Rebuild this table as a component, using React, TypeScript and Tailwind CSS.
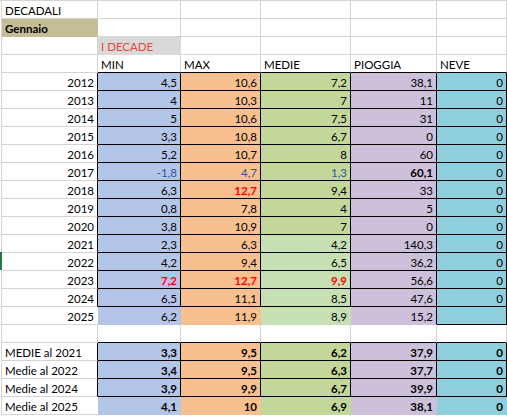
import React from "react";

type Edge = "g" | "k" | "t";
type Cell = {
  t?: string;
  right?: boolean;
  bg?: string;
  fg?: string;
  bold?: boolean;
  er?: Edge;
  eb?: Edge;
};

const R: Record<Edge, string> = {
  g: "border-r-[#d4d4d4]",
  k: "border-r-black",
  t: "border-r-transparent",
};
const B: Record<Edge, string> = {
  g: "border-b-[#d4d4d4]",
  k: "border-b-black",
  t: "border-b-transparent",
};

const BLUE = "bg-[#b4c6e7]";
const BLUE2 = "bg-[#b4c3e8]";
const ORANGE = "bg-[#f9c08f]";
const GREEN = "bg-[#c4d79b]";
const GREEN2 = "bg-[#c6e0b4]";
const PURPLE = "bg-[#ccc0da]";
const CYAN = "bg-[#8fcedd]";

const RED = "text-[#ff0000]";
const DBLUE = "text-[#2f5597]";

const empty = (er: Edge = "g", eb: Edge = "g"): Cell => ({ er, eb });

// year, MIN, MAX, MEDIE, PIOGGIA, NEVE
const years: [string, ...(string | Cell)[]][] = [
  ["2012", "4,5", "10,6", "7,2", "38,1", "0"],
  ["2013", "4", "10,3", "7", "11", "0"],
  ["2014", "5", "10,6", "7,5", "31", "0"],
  ["2015", "3,3", "10,8", "6,7", "0", "0"],
  ["2016", "5,2", "10,7", "8", "60", "0"],
  ["2017", { t: "-1,8", fg: DBLUE }, { t: "4,7", fg: DBLUE }, { t: "1,3", fg: DBLUE }, { t: "60,1", bold: true }, "0"],
  ["2018", "6,3", { t: "12,7", fg: RED, bold: true }, "9,4", "33", "0"],
  ["2019", "0,8", "7,8", "4", "5", "0"],
  ["2020", "3,8", "10,9", "7", "0", "0"],
  ["2021", "2,3", "6,3", "4,2", "140,3", "0"],
  ["2022", "4,2", "9,4", "6,5", "36,2", "0"],
  ["2023", { t: "7,2", fg: RED, bold: true }, { t: "12,7", fg: RED, bold: true }, { t: "9,9", fg: RED, bold: true }, "56,6", "0"],
  ["2024", "6,5", "11,1", "8,5", "47,6", "0"],
  ["2025", "6,2", "11,9", "8,9", "15,2", ""],
];

const medie = [
  ["MEDIE al 2021", "3,3", "9,5", "6,2", "37,9", "0"],
  ["Medie al 2022", "3,4", "9,5", "6,3", "37,7", "0"],
  ["Medie al 2024", "3,9", "9,9", "6,7", "39,9", "0"],
  ["Medie al 2025", "4,1", "10", "6,9", "38,1", "0"],
];

function buildRows(): Cell[][] {
  const rows: Cell[][] = [];
  rows.push([{ t: "DECADALI" }, empty(), empty(), empty(), empty(), empty()]);
  rows.push([
    { t: "Gennaio", bold: true, bg: "bg-[#c4bd97]", er: "t", eb: "t" },
    empty(), empty(), empty(), empty(), empty(),
  ]);
  rows.push([
    empty(),
    { t: "I DECADE", bg: "bg-[#d9d9d9]", fg: "text-[#e2473d]", er: "t", eb: "t" },
    empty(), empty(), empty(), empty(),
  ]);
  rows.push([
    empty(),
    { t: "MIN", eb: "k" },
    { t: "MAX", eb: "k" },
    { t: "MEDIE", eb: "k" },
    { t: "PIOGGIA", eb: "k" },
    { t: "NEVE", eb: "k" },
  ]);

  years.forEach((row, i) => {
    const last = i === years.length - 1;
    const y = Number(row[0]);
    const fills = [
      y >= 2023 ? BLUE2 : BLUE,
      ORANGE,
      y >= 2021 ? GREEN2 : GREEN,
      PURPLE,
      CYAN,
    ];
    const cells: Cell[] = [{ t: row[0], right: true, er: last ? "t" : "k" }];
    row.slice(1).forEach((v, j) => {
      const base: Cell = typeof v === "string" ? { t: v } : { ...v };
      base.right = true;
      base.bg = fills[j];
      if (last) {
        base.er = j >= 3 ? "k" : "t";
        base.eb = j === 4 ? "k" : "t";
      } else {
        base.er = "k";
        base.eb = "k";
      }
      cells.push(base);
    });
    rows.push(cells);
  });

  rows.push([empty(), empty("g", "k"), empty("g", "k"), empty("g", "k"), empty("g", "k"), empty("g", "k")]);

  const mfills = [BLUE, ORANGE, GREEN, PURPLE, CYAN];
  medie.forEach((row, i) => {
    const last = i === medie.length - 1;
    const cells: Cell[] = [{ t: row[0], er: last ? "t" : "k" }];
    row.slice(1).forEach((v, j) => {
      cells.push({
        t: v,
        right: true,
        bold: true,
        bg: mfills[j],
        er: last ? "t" : "k",
        eb: last ? "t" : "k",
      });
    });
    rows.push(cells);
  });

  rows.push([empty(), empty(), empty(), empty(), empty(), empty()]);
  return rows;
}

const rows = buildRows();

export default function App() {
  return (
    <div
      className="relative w-[507px] h-[416px] overflow-hidden bg-white text-black text-[11.5px]"
      style={{ fontFamily: "Lato, 'Liberation Sans', sans-serif" }}
    >
      <div className="pl-[1px] border-t border-t-[#d4d4d4]">
        <div className="grid grid-cols-[97px_83px_80px_90px_86px_70px] auto-rows-[18px]">
          {rows.map((row, ri) =>
            row.map((c, ci) => (
              <div
                key={`${ri}-${ci}`}
                className={[
                  "flex items-end px-[3px] leading-[14px] whitespace-nowrap overflow-hidden border-r border-b",
                  ci === 0 ? "border-l border-l-[#d4d4d4]" : "",
                  c.right ? "justify-end" : "justify-start",
                  c.bg ?? "",
                  c.fg ?? "",
                  c.bold ? "font-bold" : "",
                  R[c.er ?? "g"],
                  B[c.eb ?? "g"],
                ].join(" ")}
              >
                {c.t}
              </div>
            ))
          )}
        </div>
      </div>
      {/* selected row marker */}
      <div className="absolute left-0 top-[252px] w-[2px] h-[18px] bg-[#1f7a48]" />
    </div>
  );
}
